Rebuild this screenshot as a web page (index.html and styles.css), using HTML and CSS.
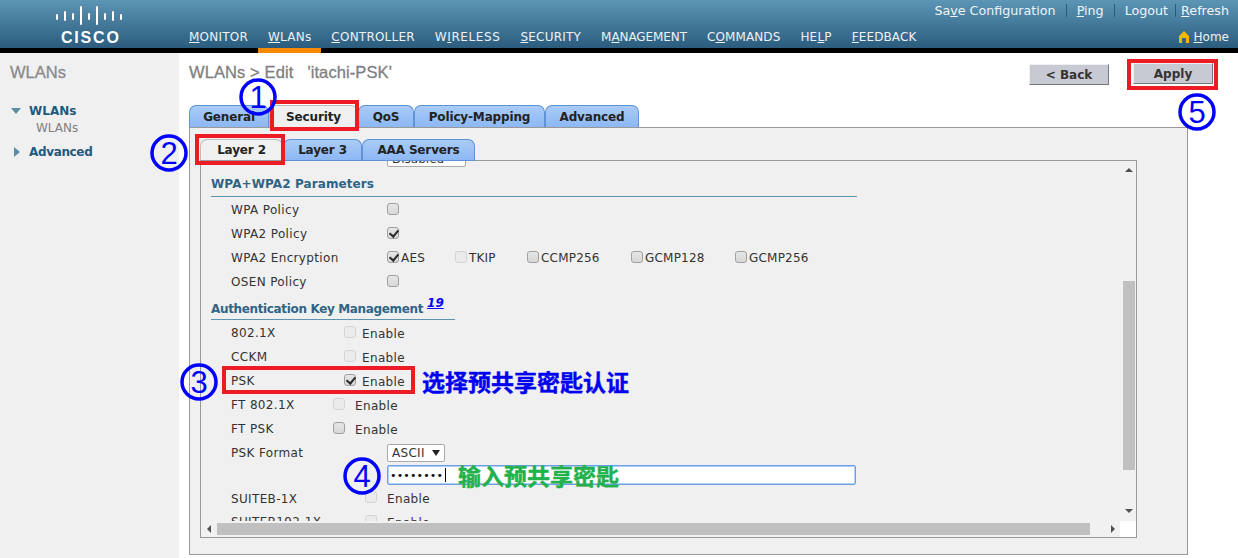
FILE: index.html
```html
<!DOCTYPE html>
<html lang="en">
<head>
<meta charset="utf-8">
<title>WLANs Edit</title>
<link rel="stylesheet" href="styles.css">
</head>
<body>
<header class="topbar">
  <div class="logo">
    <svg class="logo-bars" width="66" height="20" viewBox="0 0 66 20">
      <g stroke="#fff" stroke-width="2" stroke-linecap="round">
        <line x1="1" y1="9" x2="1" y2="13"/><line x1="9" y1="6" x2="9" y2="14"/><line x1="17" y1="8" x2="17" y2="13"/>
        <line x1="25" y1="1" x2="25" y2="18"/><line x1="33" y1="8" x2="33" y2="13"/>
        <line x1="41" y1="1" x2="41" y2="18"/><line x1="49" y1="8" x2="49" y2="13"/><line x1="57" y1="6" x2="57" y2="14"/><line x1="65" y1="9" x2="65" y2="13"/>
      </g>
    </svg>
    <span class="logo-word">CISCO</span>
  </div>
  <div class="topbar-right">
    <div class="util">
      <a>Sa<u>v</u>e Configuration</a><i class="sep"></i>
      <a><u>P</u>ing</a><i class="sep"></i>
      <a>Logout</a><i class="sep sep-near"></i>
      <a><u>R</u>efresh</a>
    </div>
    <nav class="nav">
      <a><u>M</u>ONITOR</a>
      <a class="active"><u>W</u>LANs</a>
      <a><u>C</u>ONTROLLER</a>
      <a class="nav-wide">W<u>I</u>RELESS</a>
      <a><u>S</u>ECURITY</a>
      <a class="nav-tight">M<u>A</u>NAGEMENT</a>
      <a class="nav-commands">C<u>O</u>MMANDS</a>
      <a>HE<u>L</u>P</a>
      <a class="nav-commands"><u>F</u>EEDBACK</a>
      <a class="home">
        <svg width="12" height="12" viewBox="0 0 12 12"><path d="M6 0 L11 5 V12 H8 V7 H4 V12 H1 V5 Z" fill="#f5b800"/></svg>
        <span><u>H</u>ome</span>
      </a>
    </nav>
  </div>
</header>

<div class="layout">
  <aside class="side">
    <h2 class="side-title">WLANs</h2>
    <div class="side-item"><i class="tri-down"></i><b>WLANs</b></div>
    <div class="side-sub">WLANs</div>
    <div class="side-item side-adv"><i class="tri-right"></i><b>Advanced</b></div>
  </aside>

  <main class="content">
    <div class="title-row">
      <h1 class="page-title">WLANs &gt; Edit &nbsp;&nbsp;'itachi-PSK'</h1>
      <div class="buttons">
        <button class="btn btn-back">&lt; Back</button>
        <button class="btn btn-apply">Apply</button>
      </div>
    </div>

    <div class="tabs">
      <div class="tab tab-general">General</div>
      <div class="tab tab-on tab-security">Security</div>
      <div class="tab tab-qos">QoS</div>
      <div class="tab tab-policy">Policy-Mapping</div>
      <div class="tab tab-adv">Advanced</div>
    </div>

    <section class="panel">
      <div class="subtabs">
        <div class="tab tab-on tab-l2">Layer 2</div>
        <div class="tab tab-l3">Layer 3</div>
        <div class="tab tab-aaa">AAA Servers</div>
      </div>
      <div class="frame">
        <div class="frame-main">
          <div class="view">
            <div class="cut-select">Disabled</div>
            <h3 class="sec sec-wpa">WPA+WPA2 Parameters</h3>
            <div class="row"><span class="lbl">WPA Policy</span><span class="cb"></span></div>
            <div class="row"><span class="lbl">WPA2 Policy</span><span class="cb on"></span></div>
            <div class="row">
              <span class="lbl">WPA2 Encryption</span>
              <span class="opt opt-aes"><span class="cb on"></span>AES</span>
              <span class="opt opt-tkip"><span class="cb off"></span>TKIP</span>
              <span class="opt opt-ccmp"><span class="cb"></span>CCMP256</span>
              <span class="opt opt-g128"><span class="cb"></span>GCMP128</span>
              <span class="opt"><span class="cb"></span>GCMP256</span>
            </div>
            <div class="row"><span class="lbl">OSEN Policy</span><span class="cb"></span></div>
            <h3 class="sec sec-akm">Authentication Key Management<a class="sup">19</a></h3>
            <div class="row"><span class="lbl lbl-a">802.1X</span><span class="cb off"></span><span class="en">Enable</span></div>
            <div class="row"><span class="lbl lbl-a">CCKM</span><span class="cb off"></span><span class="en">Enable</span></div>
            <div class="row"><span class="lbl lbl-a">PSK</span><span class="cb on"></span><span class="en">Enable</span></div>
            <div class="row"><span class="lbl lbl-b">FT 802.1X</span><span class="cb off"></span><span class="en en-b">Enable</span></div>
            <div class="row"><span class="lbl lbl-b">FT PSK</span><span class="cb"></span><span class="en en-b">Enable</span></div>
            <div class="row"><span class="lbl">PSK Format</span><span class="select">ASCII<i class="sel-arrow"></i></span></div>
            <div class="row row-psk"><span class="lbl"></span><span class="psk">••••••••<i class="caret"></i></span></div>
            <div class="row row-s"><span class="lbl lbl-c">SUITEB-1X</span><span class="cb off"></span><span class="en en-b">Enable</span></div>
            <div class="row"><span class="lbl lbl-c">SUITEB192-1X</span><span class="cb off"></span><span class="en en-b">Enable</span></div>
          </div>
          <div class="vbar">
            <i class="ar-up"></i>
            <div class="vthumb"></div>
            <i class="ar-down"></i>
          </div>
        </div>
        <div class="hbar">
          <i class="ar-left"></i>
          <div class="hthumb"></div>
          <i class="ar-right"></i>
          <div class="corner"></div>
        </div>
      </div>
    </section>
  </main>
</div>

<div class="mark box-sec"></div>
<div class="mark box-l2"></div>
<div class="mark box-psk"></div>
<div class="mark box-apply"></div>
<svg class="circle c1" viewBox="0 0 38 38"><circle cx="19" cy="19" r="17"/><text x="19" y="30">1</text></svg>
<svg class="circle c2" viewBox="0 0 38 38"><circle cx="19" cy="19" r="17"/><text x="19" y="30">2</text></svg>
<svg class="circle c3" viewBox="0 0 38 38"><circle cx="19" cy="19" r="17"/><text x="19" y="30">3</text></svg>
<svg class="circle c4" viewBox="0 0 38 38"><circle cx="19" cy="19" r="17"/><text x="19" y="30">4</text></svg>
<svg class="circle c5" viewBox="0 0 38 38"><circle cx="19" cy="19" r="17"/><text x="19" y="30">5</text></svg>
<div class="note note-blue">选择预共享密匙认证</div>
<div class="note note-green">输入预共享密匙</div>
</body>
</html>
```
FILE: styles.css
```css
* { box-sizing: border-box; }
html, body { margin: 0; padding: 0; }
body {
  position: relative;
  width: 1238px;
  height: 558px;
  overflow: hidden;
  background: #fff;
  font-family: "DejaVu Sans", Verdana, sans-serif;
  font-size: 12px;
  color: #333;
}
h1, h2, h3 { margin: 0; }

/* header */
.topbar {
  display: flex;
  height: 53px;
  border-bottom: 5px solid #000;
  background: linear-gradient(#5c95b5, #2b5c7e);
  color: #fff;
}
.logo {
  width: 179px;
  flex: none;
  display: flex;
  flex-direction: column;
  align-items: flex-start;
  padding: 6px 0 0 56px;
}
.logo-word {
  font: bold 16px "Liberation Sans", Arial, sans-serif;
  letter-spacing: 1.8px;
  margin: 3px 0 0 5px;
  line-height: 18px;
}
.topbar-right { flex: 1; display: flex; flex-direction: column; min-width: 0; }
.util {
  display: flex;
  flex: none;
  justify-content: flex-end;
  align-items: center;
  height: 21px;
  padding-right: 9px;
  font-size: 12.7px;
  color: #f0f4f7;
  white-space: nowrap;
}
.sep { width: 1px; height: 13px; background: #2a5b7c; margin: 0 10px; }
.sep-near { margin: 0 5px 0 7px; }
.nav {
  display: flex;
  flex: none;
  height: 32px;
  font-size: 12px;
  letter-spacing: .22px;
  white-space: nowrap;
}
.nav a {
  height: 32px;
  padding: 8px 10px 0;
  color: #edf2f5;
  line-height: 16px;
}
.nav .active { border-bottom: 5px solid #f58a00; }
.nav .nav-wide { letter-spacing: .6px; }
.nav .nav-tight { letter-spacing: -.08px; }
.nav .nav-commands { letter-spacing: .1px; }
.nav .home {
  margin-left: auto;
  display: flex;
  gap: 4px;
  padding-right: 9px;
  letter-spacing: 0;
  align-items: flex-start;
}
.nav .home svg { margin-top: 2px; }

/* layout */
.layout { display: flex; height: 505px; }
.side { width: 179px; flex: none; background: #f0f0f0; padding: 10px 0 0 10px; }
.side-title {
  font: normal 16.5px/18px "Liberation Sans", Arial, sans-serif;
  -webkit-text-stroke: .3px #8a8a8a;
  color: #8a8a8a;
  margin-bottom: 22px;
}
.side-item { display: flex; align-items: center; height: 16px; color: #1f5a7e; }
.side-item b { margin-left: 8px; }
.side-sub { padding-left: 26px; height: 18px; line-height: 18px; color: #808080; }
.side-adv { margin-top: 7px; }
.side-adv b { margin-left: 9px; letter-spacing: -.35px; }
.tri-down { width: 0; height: 0; border: 5px solid transparent; border-top: 6px solid #5a8ea0; border-bottom: 0; margin-left: 1px; }
.tri-right { width: 0; height: 0; border: 5px solid transparent; border-left: 6px solid #5a8ea0; border-right: 0; margin-left: 4px; }

.content { flex: 1; padding: 0 50px 0 10px; min-width: 0; }
.title-row { display: flex; justify-content: space-between; height: 52px; padding-top: 10px; }
.page-title {
  font: normal 16.5px/18px "Liberation Sans", Arial, sans-serif;
  -webkit-text-stroke: .3px #808080;
  color: #808080;
  letter-spacing: .1px;
  white-space: pre;
}
.buttons { display: flex; align-items: flex-start; margin-right: -25px; }
.btn {
  width: 80px;
  height: 21px;
  padding: 0;
  font: bold 12px "DejaVu Sans", Verdana, sans-serif;
  color: #333;
  background: #c7c9d3;
  border: 1px solid;
  border-color: #f0f0f0 #777 #777 #f0f0f0;
}
.btn-back { margin: 1px 24px 0 0; }

/* tabs */
.tabs { display: flex; height: 22px; }
.tab {
  position: relative;
  height: 100%;
  display: flex;
  align-items: center;
  justify-content: center;
  font-weight: bold;
  letter-spacing: -.15px;
  color: #222;
  border: 1px solid #5f93d6;
  border-bottom: 0;
  border-radius: 7px 7px 0 0;
  background: linear-gradient(#a9cbf6, #8db8f5);
  white-space: nowrap;
}
.tab-on { background: #f0f0f0; border-color: #bbb; }
.tab-general { width: 80px; }
.tab-security { width: 89px; }
.tab-qos { width: 56px; }
.tab-policy { width: 131px; }
.tab-adv { width: 94px; }
.tab-l2 { width: 83px; }
.tab-l3 { width: 79px; }
.tab-aaa { width: 113px; }
.tab-l3, .tab-aaa { box-shadow: 0 1px 0 #5f93d6; }

.panel {
  height: 428px;
  background: #f0f0f0;
  border: 1px solid #999;
  padding: 11px 50px 0 10px;
}
.subtabs { display: flex; height: 21px; }
.frame { height: 378px; border: 1px solid #999; display: flex; flex-direction: column; }
.frame-main { flex: 1; display: flex; min-height: 0; }
.view { flex: 1; overflow: hidden; min-width: 0; }
.cut-select {
  width: 79px;
  height: 20px;
  margin: -14px 0 0 186px;
  padding-left: 4px;
  line-height: 22px;
  background: #fff;
  border: 1px solid #aaa;
  border-radius: 2px;
  color: #333;
  overflow: hidden;
}
.sec {
  margin: 0 0 1px 10px;
  font-size: 12px;
  font-weight: bold;
  color: #2e6484;
  border-bottom: 1px solid #5f94ae;
  display: flex;
  align-items: flex-end;
  padding-bottom: 5px;
  letter-spacing: .1px;
  white-space: nowrap;
}
.sec-wpa { width: 646px; height: 30px; }
.sec-akm { width: 244px; height: 26px; padding-bottom: 3px; letter-spacing: -.35px; }
.sup {
  color: #00f;
  font-style: italic;
  text-decoration: underline;
  margin: 0 0 6px 4px;
  letter-spacing: 0;
}
.row { display: flex; align-items: center; height: 24px; padding-left: 30px; white-space: nowrap; }
.row-psk { height: 22px; }
.row-s { height: 23px; }
.lbl { width: 156px; flex: none; letter-spacing: .35px; }
.lbl-a { width: 113px; }
.lbl-b { width: 102px; }
.lbl-c { width: 134px; }
.cb {
  width: 12px;
  height: 12px;
  flex: none;
  margin-top: -3px;
  border: 1px solid #a0a0a0;
  border-radius: 3px;
  background: linear-gradient(#e6e6e6, #d8d8d8);
  position: relative;
}
.cb.off { border-color: #d4d4d4; background: #ebebeb; }
.cb.on::after {
  content: "";
  position: absolute;
  left: 3px;
  top: 0;
  width: 4px;
  height: 7px;
  border: solid #2a2a2a;
  border-width: 0 2px 2px 0;
  transform: rotate(40deg);
}
.en { margin: 1px 0 0 6px; letter-spacing: .35px; }
.en-b { margin-left: 10px; }
.opt { display: flex; align-items: center; letter-spacing: .2px; }
.opt .cb { margin-right: 2px; }
.opt-aes { width: 68px; }
.opt-tkip { width: 72px; }
.opt-ccmp { width: 104px; }
.opt-g128 { width: 104px; }
.select {
  display: flex;
  align-items: center;
  justify-content: space-between;
  width: 58px;
  height: 18px;
  padding: 0 4px;
  background: #fff;
  border: 1px solid #aaa;
  border-radius: 2px;
  letter-spacing: .3px;
}
.sel-arrow { width: 0; height: 0; border: 4px solid transparent; border-top: 6px solid #222; border-bottom: 0; }
.psk {
  display: flex;
  align-items: center;
  width: 469px;
  height: 20px;
  margin-top: -2px;
  padding-left: 2px;
  background: #fff;
  border: 1px solid #6f9fe6;
  box-shadow: inset 0 0 0 1px #b4cdf3;
  border-radius: 2px;
  font-size: 11px;
  letter-spacing: .15px;
  color: #111;
}
.caret { width: 1px; height: 14px; background: #000; margin-left: 2px; }

/* scrollbars */
.vbar { width: 15px; flex: none; display: flex; flex-direction: column; align-items: center; background: #f1f1f1; }
.vthumb { width: 12px; height: 189px; margin: 109px 0 0 1px; flex: none; background: #c0c0c0; }
.ar-up { width: 0; height: 0; margin-top: 7px; flex: none; border: 4px solid transparent; border-bottom: 4px solid #505050; border-top: 0; }
.ar-down { width: 0; height: 0; margin-top: 39px; flex: none; border: 4px solid transparent; border-top: 4px solid #505050; border-bottom: 0; }
.hbar { height: 16px; flex: none; display: flex; align-items: center; background: #f1f1f1; }
.hthumb { width: 873px; height: 12px; margin-left: 6px; background: #c0c0c0; }
.ar-left { width: 0; height: 0; margin-left: 6px; border: 4px solid transparent; border-right: 4px solid #505050; border-left: 0; }
.ar-right { width: 0; height: 0; margin-left: 21px; border: 4px solid transparent; border-left: 4px solid #505050; border-right: 0; }
.corner { width: 16px; height: 16px; margin-left: auto; background: #fff; }

/* annotations painted over the screenshot */
.mark { position: absolute; border: 4px solid #ed1c24; }
.box-sec { left: 270px; top: 100px; width: 89px; height: 31px; }
.box-l2 { left: 195px; top: 134px; width: 90px; height: 31px; }
.box-psk { left: 222px; top: 366px; width: 193px; height: 28px; }
.box-apply { left: 1127px; top: 59px; width: 91px; height: 31px; }
.circle { position: absolute; width: 38px; height: 38px; }
.circle circle { fill: none; stroke: #00f; stroke-width: 3.5; }
.circle text { fill: #00f; font: 31px "Liberation Sans Narrow", "Liberation Sans", Arial, sans-serif; text-anchor: middle; }
.c1 { left: 239px; top: 78px; }
.c2 { left: 150px; top: 134px; }
.c3 { left: 180px; top: 363px; }
.c4 { left: 343px; top: 457px; }
.c5 { left: 1178px; top: 93px; }
.note {
  position: absolute;
  font: bold 23px/26px "Noto Sans CJK SC", sans-serif;
  -webkit-text-stroke: .4px currentColor;
  white-space: nowrap;
}
.note-blue { left: 422px; top: 368px; color: #0000f0; }
.note-green { left: 458px; top: 462px; color: #22b14c; }
```
